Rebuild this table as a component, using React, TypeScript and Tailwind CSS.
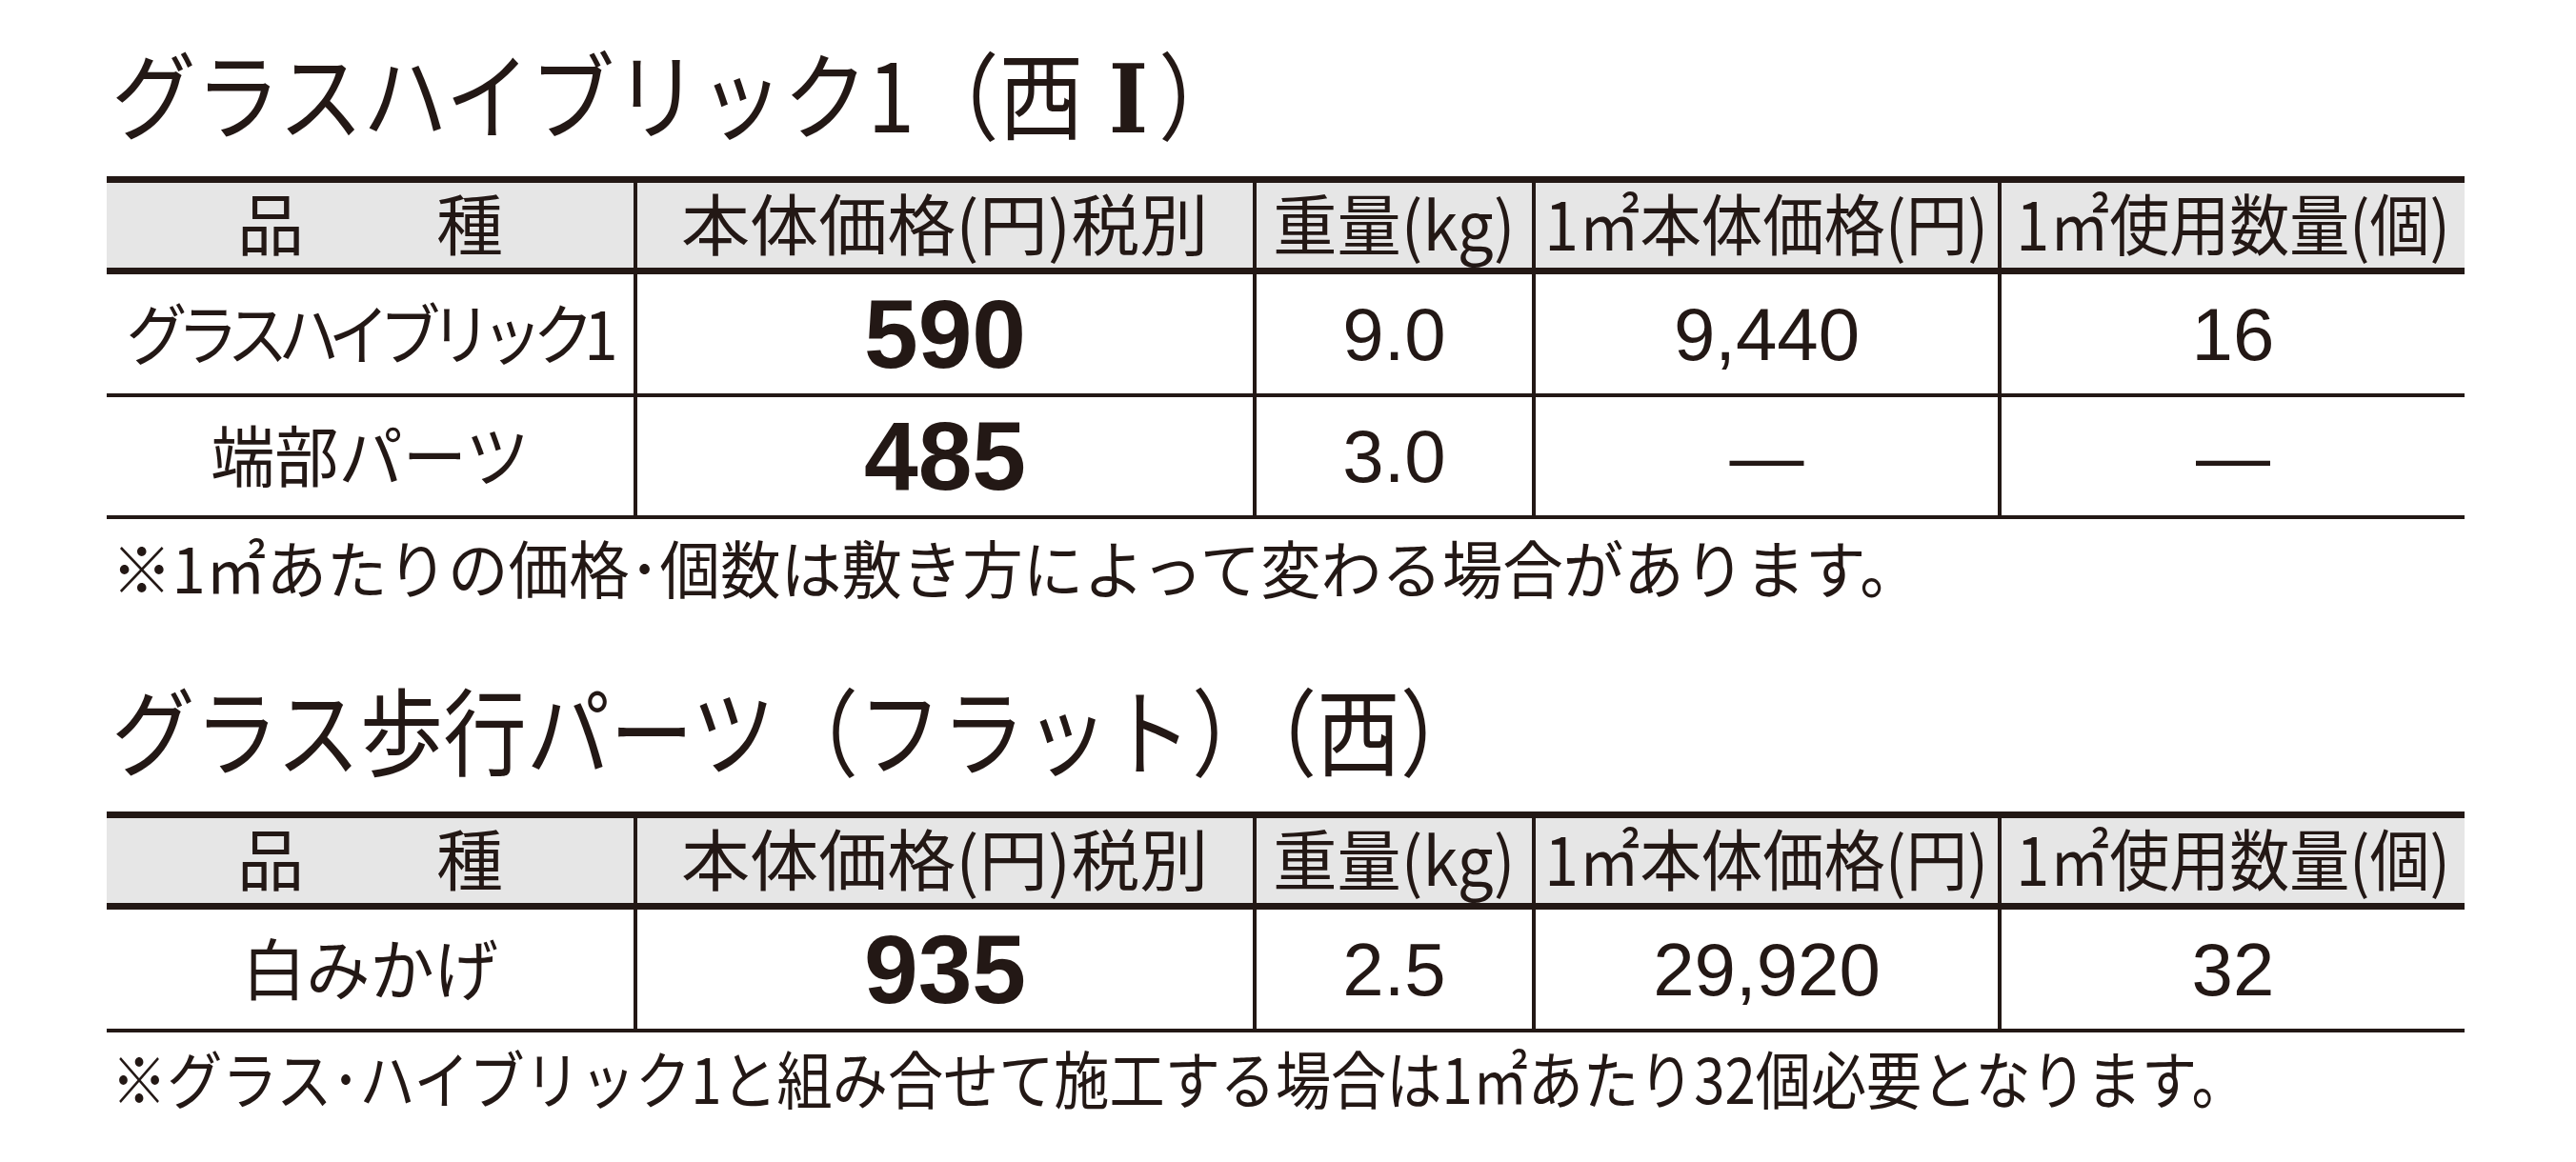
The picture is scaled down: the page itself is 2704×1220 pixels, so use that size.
import React from "react";

const JP = "font-['Noto_Sans_CJK_JP',sans-serif]";
const NUM = "font-['Liberation_Sans',Arial,sans-serif]";

function Header() {
  return (
    <div
      className={`flex h-[96px] border-b-[7px] border-[#231815] bg-[#e6e6e6] text-[70px] leading-[70px] ${JP}`}
    >
      <div className="flex w-[553px] items-center justify-center gap-[139px] pb-[7px]">
        <span>品</span>
        <span>種</span>
      </div>
      <div className="flex w-[650px] items-center justify-center border-l-4 border-[#231815] pb-[7px]">
        <span className="inline-block whitespace-nowrap scale-x-[1.03]">本体価格(円)税別</span>
      </div>
      <div className="flex w-[293px] items-center justify-center border-l-4 border-[#231815] pb-[7px]">
        <span className="inline-block whitespace-nowrap scale-x-[0.96]">重量(kg)</span>
      </div>
      <div className="flex w-[489px] items-center justify-center border-l-4 border-[#231815] pb-[7px]">
        <span className="inline-block whitespace-nowrap scale-x-[0.92]">1㎡本体価格(円)</span>
      </div>
      <div className="flex w-[490px] items-center justify-center border-l-4 border-[#231815] pb-[7px]">
        <span className="inline-block whitespace-nowrap scale-x-[0.9]">1㎡使用数量(個)</span>
      </div>
    </div>
  );
}

function Row({
  name,
  nameClass,
  price,
  weight,
  unit,
  qty,
  rowClass,
}: {
  name: string;
  nameClass: string;
  price: string;
  weight: string;
  unit: string;
  qty: string;
  rowClass: string;
}) {
  return (
    <div className={`flex border-b-4 border-[#231815] ${rowClass}`}>
      <div
        className={`flex w-[553px] items-center justify-center overflow-visible pb-[6px] leading-[70px] ${JP} ${nameClass}`}
      >
        <span className="inline-block whitespace-nowrap">{name}</span>
      </div>
      <div
        className={`flex w-[650px] items-center justify-center border-l-4 border-[#231815] text-[102px] font-bold leading-[102px] ${NUM}`}
      >
        {price}
      </div>
      <div
        className={`flex w-[293px] items-center justify-center border-l-4 border-[#231815] text-[78px] leading-[78px] ${NUM}`}
      >
        {weight}
      </div>
      <div
        className={`flex w-[489px] items-center justify-center border-l-4 border-[#231815] text-[78px] leading-[78px] ${NUM}`}
      >
        {unit}
      </div>
      <div
        className={`flex w-[490px] items-center justify-center border-l-4 border-[#231815] text-[78px] leading-[78px] ${NUM}`}
      >
        {qty}
      </div>
    </div>
  );
}

export default function App() {
  return (
    <div className={`min-h-[1220px] w-[2704px] bg-white pl-[112px] pt-[46px] text-[#231815] ${JP}`}>
      <div className="ml-[5px] h-[100px] whitespace-nowrap text-[100px] leading-[100px]">
        <span className="inline-block origin-left scale-x-[0.886]">
          グラスハイブリック1（西
          <span className="ml-[30px] mr-[12px] font-['DejaVu_Serif','Noto_Sans_CJK_JP',serif] font-semibold">Ⅰ</span>）
        </span>
      </div>

      <div className="mt-[39px] w-[2475px] border-t-[7px] border-[#231815]">
        <Header />
        <Row
          name="グラスハイブリック1"
          nameClass="text-[70px] tracking-[-11px] scale-x-[0.91] -translate-x-[3px]"
          price="590"
          weight="9.0"
          unit="9,440"
          qty="16"
          rowClass="h-[129px]"
        />
        <Row
          name="端部パーツ"
          nameClass="text-[70px] scale-x-[0.96]"
          price="485"
          weight="3.0"
          unit="—"
          qty="—"
          rowClass="h-[128px]"
        />
      </div>

      <div className="ml-[5px] mt-[16px] h-[66px] whitespace-nowrap text-[66px] leading-[66px]">
        <span className="inline-block origin-left scale-x-[0.963]">
          ※1㎡あたりの価格･個数は敷き方によって変わる場合があります。
        </span>
      </div>

      <div className="ml-[5px] mt-[87px] h-[100px] whitespace-nowrap text-[100px] leading-[100px]">
        <span className="inline-block origin-left scale-x-[0.875]">グラス歩行パーツ（フラット）（西）</span>
      </div>

      <div className="mt-[38px] w-[2475px] border-t-[7px] border-[#231815]">
        <Header />
        <Row
          name="白みかげ"
          nameClass="text-[70px] scale-x-[0.96]"
          price="935"
          weight="2.5"
          unit="29,920"
          qty="32"
          rowClass="h-[129px]"
        />
      </div>

      <div className="ml-[5px] mt-[13px] h-[66px] whitespace-nowrap text-[66px] leading-[66px]">
        <span className="inline-block origin-left scale-x-[0.881]">
          ※グラス･ハイブリック1と組み合せて施工する場合は1㎡あたり32個必要となります。
        </span>
      </div>
    </div>
  );
}
